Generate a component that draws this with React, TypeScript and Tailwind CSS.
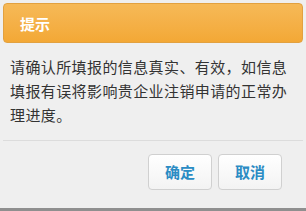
export default function App() {
  return (
    <div className="w-[306px] h-[211px] bg-[#8f8f8f] overflow-hidden" style={{ fontFamily: '"Microsoft YaHei", "Noto Sans CJK SC", sans-serif' }}>
      <div className="h-[208px] bg-[#efefef] flex flex-col">
        {/* 标题栏 */}
        <div className="mx-[3px] mt-[3px] h-[40px] rounded-[4px] border border-[#e2a140] bg-gradient-to-b from-[#f6b957] to-[#f3a835] flex items-center pl-[16px]">
          <span className="text-white font-bold text-[15px] leading-none">提示</span>
        </div>

        {/* 内容 */}
        <div className="pl-[10px] pr-[18px] pt-[12px] text-[15px] tracking-[0.4px] leading-[24px] text-[#333] h-[97px]">
          请确认所填报的信息真实、有效，如信息填报有误将影响贵企业注销申请的正常办理进度。
        </div>

        <div className="mx-[3px] border-t border-[#dcdcdc]" />

        {/* 按钮 */}
        <div className="flex justify-end gap-[6px] pr-[24px] pt-[13px]">
          <button className="w-[64px] h-[36px] rounded-[4px] border border-[#d0d0d0] bg-gradient-to-b from-white to-[#f3f3f3] text-[#2b8cc4] font-bold text-[15px]">
            确定
          </button>
          <button className="w-[64px] h-[36px] rounded-[4px] border border-[#d0d0d0] bg-gradient-to-b from-white to-[#f3f3f3] text-[#2b8cc4] font-bold text-[15px]">
            取消
          </button>
        </div>
      </div>
    </div>
  );
}
